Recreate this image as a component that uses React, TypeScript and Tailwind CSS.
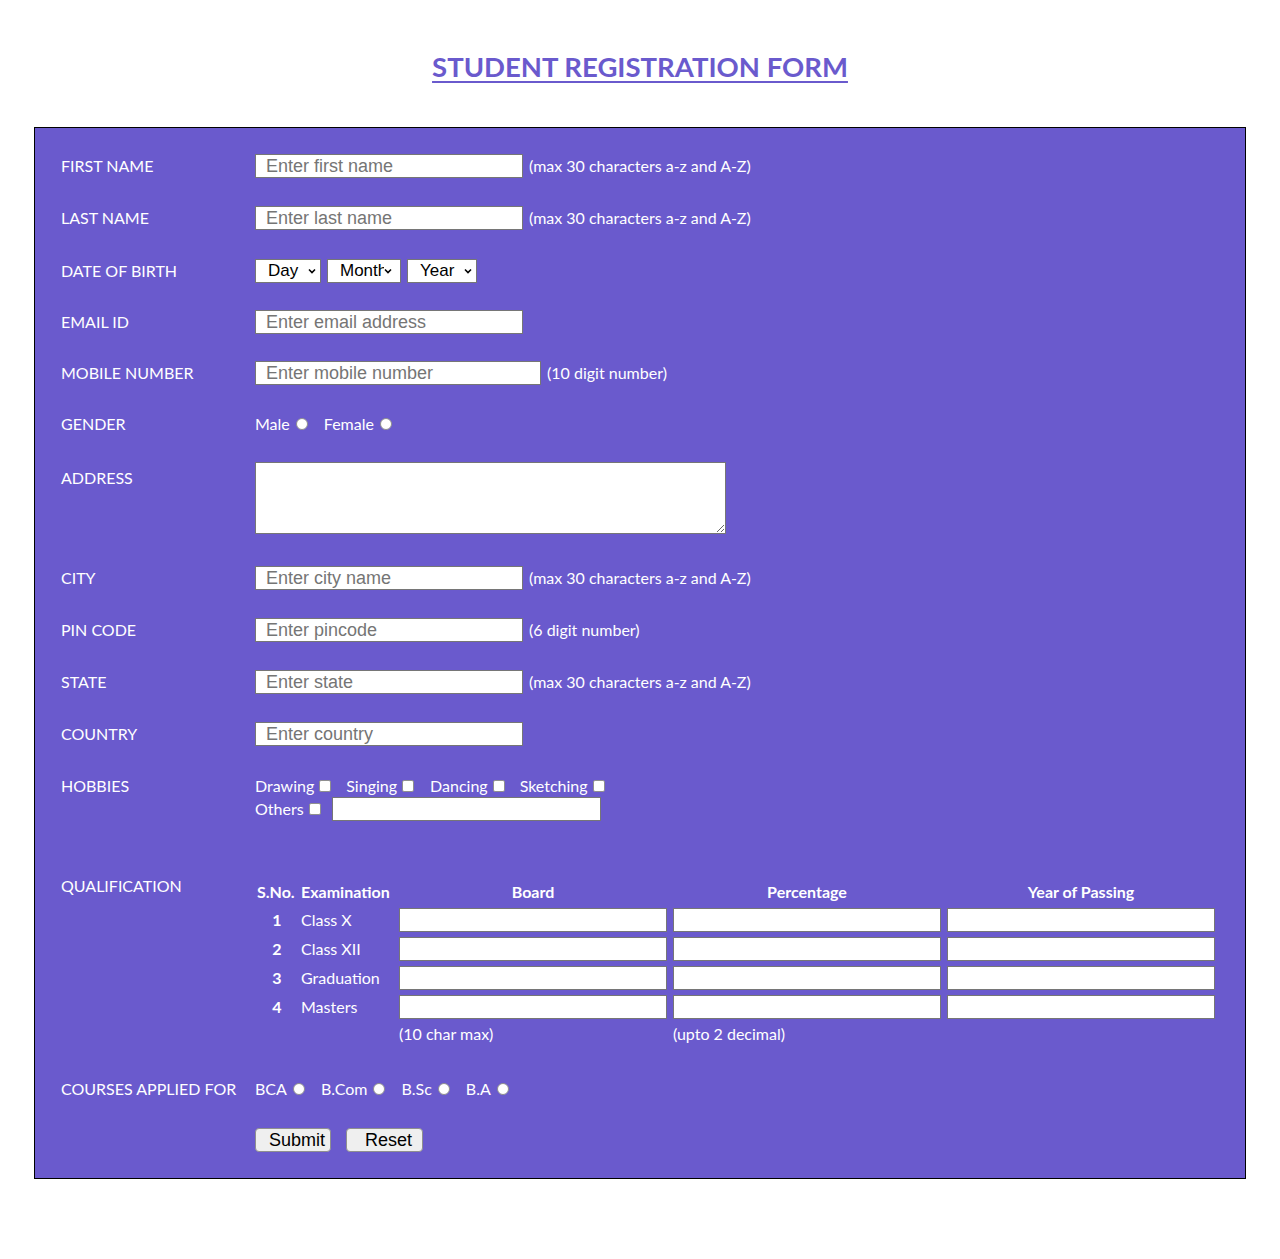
import React from "react";

const inputCls =
  "h-[24px] border border-[#767676] bg-white px-[10px] text-[18px] text-black placeholder:text-[#757575] outline-none";
const arial = { fontFamily: '"Liberation Sans", Arial, sans-serif' };

type RowProps = {
  label: string;
  className?: string;
  labelClass?: string;
  children: React.ReactNode;
};

const Row = ({ label, className = "", labelClass = "", children }: RowProps) => {
  return (
    <div className={`flex items-center ${className}`}>
      <div className={`w-[194px] shrink-0 ${labelClass}`}>{label}</div>
      {children}
    </div>
  );
};

const TextInput = ({
  placeholder,
  width = "w-[268px]",
}: {
  placeholder?: string;
  width?: string;
}) => (
  <input
    type="text"
    placeholder={placeholder}
    className={`${inputCls} ${width}`}
    style={arial}
  />
);

const Hint = ({ children }: { children: React.ReactNode }) => (
  <span className="ml-[6px]">{children}</span>
);

const Chevron = () => (
  <svg width="8" height="6" viewBox="0 0 8 6" className="shrink-0">
    <path d="M1 1.5 L4 4.5 L7 1.5" fill="none" stroke="black" strokeWidth="1.6" />
  </svg>
);

// mimics a native select; the label is clipped like the narrow "Month" box
const FakeSelect = ({
  text,
  width,
  textWidth,
}: {
  text: string;
  width: string;
  textWidth: string;
}) => (
  <div
    className={`flex h-[24px] items-center border border-[#767676] bg-white pl-[12px] text-[17px] text-black ${width}`}
    style={arial}
  >
    <span className={`overflow-hidden whitespace-nowrap ${textWidth}`}>{text}</span>
    <Chevron />
  </div>
);

const Dot = ({ name }: { name: string }) => (
  <input
    type="radio"
    name={name}
    className="ml-[6px] h-[12px] w-[12px] appearance-none rounded-full border border-[#8f8f8f] bg-white"
  />
);

const Box = () => (
  <input
    type="checkbox"
    className="ml-[5px] h-[12px] w-[12px] appearance-none rounded-[2px] border border-[#8f8f8f] bg-white"
  />
);

const exams = ["Class X", "Class XII", "Graduation", "Masters"];

export default function App() {
  return (
    <div
      className="min-h-screen bg-white pb-[80px]"
      style={{ fontFamily: 'Lato, "Open Sans", sans-serif' }}
    >
      <h1 className="pt-[49px] text-center text-[27.5px] leading-[36px] font-bold">
        <span className="text-[#6a5acd] underline decoration-[2px] underline-offset-[4px]">
          STUDENT REGISTRATION FORM
        </span>
      </h1>

      <form className="mx-[34px] mt-[42px] border border-black bg-[#6a5acd] pt-[26px] pb-[26px] pl-[26px] pr-[27px] text-[16px] text-white">
        <Row label="FIRST NAME">
          <TextInput placeholder="Enter first name" />
          <Hint>(max 30 characters a-z and A-Z)</Hint>
        </Row>
        <Row label="LAST NAME" className="mt-[28px]">
          <TextInput placeholder="Enter last name" />
          <Hint>(max 30 characters a-z and A-Z)</Hint>
        </Row>
        <Row label="DATE OF BIRTH" className="mt-[29px]">
          <div className="flex gap-[6px]">
            <FakeSelect text="Day" width="w-[66px]" textWidth="w-[40px]" />
            <FakeSelect text="Month" width="w-[74px]" textWidth="w-[44px]" />
            <FakeSelect text="Year" width="w-[70px]" textWidth="w-[44px]" />
          </div>
        </Row>
        <Row label="EMAIL ID" className="mt-[27px]">
          <TextInput placeholder="Enter email address" />
        </Row>
        <Row label="MOBILE NUMBER" className="mt-[27px]">
          <TextInput placeholder="Enter mobile number" width="w-[286px]" />
          <Hint>(10 digit number)</Hint>
        </Row>
        <Row label="GENDER" className="mt-[27px] h-[24px]">
          <div className="flex items-center">
            <span>Male</span>
            <Dot name="gender" />
            <span className="ml-[16px]">Female</span>
            <Dot name="gender" />
          </div>
        </Row>
        <div className="mt-[26px] flex items-start">
          <div className="w-[194px] shrink-0 pt-[4px] leading-[24px]">ADDRESS</div>
          <textarea className="h-[72px] w-[471px] border border-[#767676] bg-white text-black outline-none" />
        </div>
        <Row label="CITY" className="mt-[32px]">
          <TextInput placeholder="Enter city name" />
          <Hint>(max 30 characters a-z and A-Z)</Hint>
        </Row>
        <Row label="PIN CODE" className="mt-[28px]">
          <TextInput placeholder="Enter pincode" />
          <Hint>(6 digit number)</Hint>
        </Row>
        <Row label="STATE" className="mt-[28px]">
          <TextInput placeholder="Enter state" />
          <Hint>(max 30 characters a-z and A-Z)</Hint>
        </Row>
        <Row label="COUNTRY" className="mt-[28px]">
          <TextInput placeholder="Enter country" />
        </Row>

        <div className="mt-[29px] flex items-start">
          <div className="flex h-[22px] w-[194px] shrink-0 items-center">HOBBIES</div>
          <div className="flex flex-col">
            <div className="flex h-[22px] items-center">
              <span>Drawing</span>
              <Box />
              <span className="ml-[15px]">Singing</span>
              <Box />
              <span className="ml-[16px]">Dancing</span>
              <Box />
              <span className="ml-[15px]">Sketching</span>
              <Box />
            </div>
            <div className="flex h-[24px] items-center">
              <span>Others</span>
              <Box />
              <input
                type="text"
                className="ml-[11px] h-[24px] w-[269px] border border-[#767676] bg-white outline-none"
              />
            </div>
          </div>
        </div>

        <div className="mt-[53px] flex items-start">
          <div className="flex h-[24px] w-[194px] shrink-0 items-center">QUALIFICATION</div>
          <div className="flex flex-col pt-[6px]">
            <div className="flex h-[24px] items-center font-bold">
              <div className="w-[44px] pl-[2px]">S.No.</div>
              <div className="w-[100px] pl-[2px]">Examination</div>
              <div className="w-[268px] text-center">Board</div>
              <div className="ml-[6px] w-[268px] text-center">Percentage</div>
              <div className="ml-[6px] w-[268px] text-center">Year of Passing</div>
            </div>
            <div className="mt-[4px] flex flex-col gap-[5px]">
              {exams.map((exam, i) => (
                <div key={exam} className="flex h-[24px] items-center">
                  <div className="w-[44px] text-center font-bold">{i + 1}</div>
                  <div className="w-[100px] pl-[2px]">{exam}</div>
                  <input type="text" className={`${inputCls} w-[268px]`} />
                  <input type="text" className={`${inputCls} ml-[6px] w-[268px]`} />
                  <input type="text" className={`${inputCls} ml-[6px] w-[268px]`} />
                </div>
              ))}
            </div>
            <div className="mt-[3px] flex h-[24px] items-center">
              <div className="w-[144px]" />
              <div className="w-[274px]">(10 char max)</div>
              <div>(upto 2 decimal)</div>
            </div>
          </div>
        </div>

        <Row label="COURSES APPLIED FOR" className="mt-[31px] h-[24px]">
          <div className="flex items-center">
            <span>BCA</span>
            <Dot name="course" />
            <span className="ml-[16px]">B.Com</span>
            <Dot name="course" />
            <span className="ml-[16px]">B.Sc</span>
            <Dot name="course" />
            <span className="ml-[16px]">B.A</span>
            <Dot name="course" />
          </div>
        </Row>

        <div className="mt-[27px] flex gap-[15px] pl-[194px]" style={arial}>
          <button
            type="submit"
            className="h-[24px] w-[76px] rounded-[4px] border border-[#8f8f8f] bg-[#efefef] pl-[8px] text-center text-[18px] leading-none text-black"
          >
            Submit
          </button>
          <button
            type="reset"
            className="h-[24px] w-[77px] rounded-[4px] border border-[#8f8f8f] bg-[#efefef] pl-[8px] text-center text-[18px] leading-none text-black"
          >
            Reset
          </button>
        </div>
      </form>
    </div>
  );
}
